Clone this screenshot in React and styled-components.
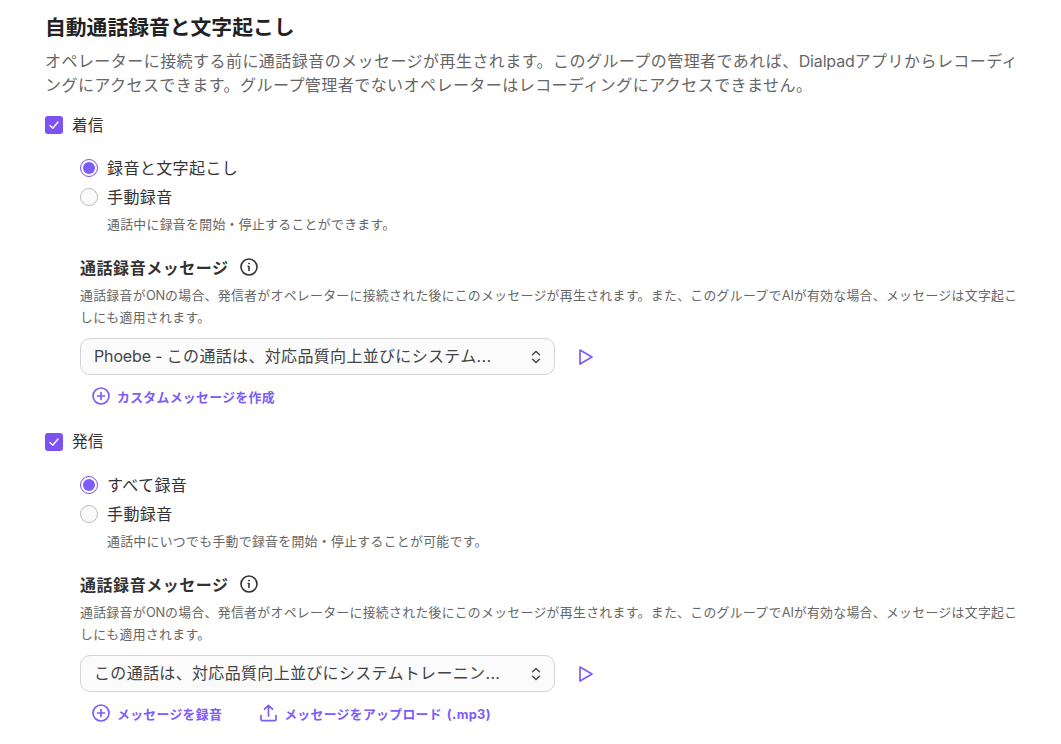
import React from 'react';
import styled, { createGlobalStyle } from 'styled-components';

const Global = createGlobalStyle`
  html, body { margin: 0; padding: 0; background: #fff; }
  body { font-family: Inter, "Noto Sans CJK JP", sans-serif; color: #333; height: 744px; overflow: hidden; }
`;
const Page = styled.div`
  padding: 14px 30px 0 45px;
  display: flex;
  flex-direction: column;
`;
const Title = styled.h1`
  margin: 0;
  font-size: 20.8px;
  line-height: 27px;
  font-weight: 700;
  color: #222;
`;
const Lead = styled.p`
  margin: 8px 0 0;
  font-size: 16px;
  letter-spacing: 0.45px;
  line-height: 24px;
  color: #666;
`;
const Line = styled.span`
  display: block;
  white-space: nowrap;
`;
const Latin = styled.span`
  letter-spacing: -0.15px;
`;
const RowText = styled.span`
  margin-bottom: 2px;
`;
const SelectText = styled.span`
  margin-bottom: 3px;
`;
const CheckRow = styled.label`
  display: flex;
  align-items: center;
  gap: 9px;
  height: 24px;
  font-size: 15.7px;
  color: #333;
  margin-top: ${p => p.$top}px;
`;
const CheckBox = styled.span`
  width: 18px;
  height: 18px;
  border-radius: 3px;
  background: #7c52f5;
  display: flex;
  align-items: center;
  justify-content: center;
`;
const Indent = styled.div`
  margin-left: 35px;
  display: flex;
  flex-direction: column;
`;
const Radios = styled.div`
  margin-top: 19px;
  display: flex;
  flex-direction: column;
  gap: 5px;
`;
const RadioRow = styled.label`
  display: flex;
  align-items: center;
  gap: 9px;
  height: 24px;
  font-size: 16px;
  letter-spacing: 0.4px;
  color: #333;
`;
const Radio = styled.span`
  width: 18px;
  height: 18px;
  box-sizing: border-box;
  border-radius: 50%;
  border: 1px solid ${p => (p.$on ? '#7c52f5' : '#bdbdbd')};
  background: ${p => (p.$on ? '#fff' : '#fafafa')};
  display: flex;
  align-items: center;
  justify-content: center;
  &::after {
    content: '';
    display: ${p => (p.$on ? 'block' : 'none')};
    width: 12px;
    height: 12px;
    border-radius: 50%;
    background: #7c5cfa;
  }
`;
const Hint = styled.div`
  margin: 6.4px 0 0 27px;
  font-size: 12.85px;
  letter-spacing: 0.33px;
  line-height: 20px;
  color: #666;
`;
const FieldHead = styled.div`
  margin-top: 20px;
  display: flex;
  align-items: center;
  gap: 11px;
  height: 24px;
  font-size: 16px;
  letter-spacing: 0.55px;
  font-weight: 700;
  color: #333;
`;
const FieldHelp = styled.p`
  margin: 6px 0 0;
  font-size: 12.85px;
  letter-spacing: 0.33px;
  line-height: 22px;
  color: #666;
`;
const SelectRow = styled.div`
  margin-top: 9px;
  display: flex;
  align-items: center;
  gap: 23px;
`;
const Select = styled.div`
  width: 475px;
  height: 37px;
  box-sizing: border-box;
  border: 1px solid #d4d4d4;
  border-radius: 10px;
  background: #fbfbfb;
  display: flex;
  align-items: center;
  justify-content: space-between;
  padding: 0 13px;
  font-size: 16px;
  letter-spacing: 0.33px;
  color: #444;
`;
const Actions = styled.div`
  margin-top: 11px;
  padding-left: 12px;
  display: flex;
  gap: 38px;
  height: 20px;
`;
const Action = styled.a`
  display: flex;
  align-items: center;
  gap: 7px;
  font-size: 12.85px;
  letter-spacing: 0.33px;
  word-spacing: 1.500px;
  font-weight: 700;
  color: #7c5cfa;
`;

const Check = () => (
  <svg width="12" height="12" viewBox="0 0 12 12" fill="none" stroke="#fff" strokeWidth="1.4" strokeLinecap="round" strokeLinejoin="round">
    <path d="M2 6.5 4.8 9.2 10 3" />
  </svg>
);
const Info = () => (
  <svg width="18" height="18" viewBox="0 0 18 18" fill="none" stroke="#333" strokeWidth="1.6" strokeLinecap="round">
    <circle cx="9" cy="9" r="8" />
    <path d="M9 8.500v4M8.200 8.500H9" />
    <circle cx="9" cy="5.600" r=".5" fill="#333" strokeWidth="1" />
  </svg>
);
const Chevrons = () => (
  <svg width="10" height="16" viewBox="0 0 10 16" fill="none" stroke="#444" strokeWidth="1.4" strokeLinecap="round" strokeLinejoin="round">
    <path d="M1.500 5.800 5 2.500 8.500 5.800M1.500 10.200 5 13.500 8.500 10.200" />
  </svg>
);
const Play = () => (
  <svg width="16" height="18" viewBox="0 0 16 18" fill="none" stroke="#7c5cfa" strokeWidth="1.7" strokeLinejoin="round">
    <path d="M2 2 14 9 2 16Z" />
  </svg>
);
const Plus = () => (
  <svg width="18" height="18" viewBox="0 0 18 18" fill="none" stroke="#7c5cfa" strokeWidth="1.7" strokeLinecap="round">
    <circle cx="9" cy="9" r="8" />
    <path d="M9 5.500v7M5.500 9h7" />
  </svg>
);
const Upload = () => (
  <svg width="17" height="18" viewBox="0.5 0 17 18" fill="none" stroke="#7c5cfa" strokeWidth="1.7" strokeLinecap="round" strokeLinejoin="round">
    <path d="M1.500 11.500v3.700c0 .8.700 1.500 1.500 1.500h12c.8 0 1.500-.7 1.500-1.500v-3.700M9 12V1.500M5 5.200 9 1.300l4 3.900" />
  </svg>
);

const Help = () => (
  <FieldHelp>
    <Line>通話録音が<Latin>ON</Latin>の場合、発信者がオペレーターに接続された後にこのメッセージが再生されます。また、このグループで<Latin>AI</Latin>が有効な場合、メッセージは文字起こ</Line>
    <Line>しにも適用されます。</Line>
  </FieldHelp>
);

const Section = ({ label, top, first, hint, select, children }) => (
  <>
    <CheckRow $top={top}><CheckBox><Check /></CheckBox><RowText>{label}</RowText></CheckRow>
    <Indent>
      <Radios>
        <RadioRow><Radio $on /><RowText>{first}</RowText></RadioRow>
        <RadioRow><Radio /><RowText>手動録音</RowText></RadioRow>
      </Radios>
      <Hint>{hint}</Hint>
      <FieldHead>通話録音メッセージ<Info /></FieldHead>
      <Help />
      <SelectRow>
        <Select><SelectText>{select}</SelectText><Chevrons /></Select>
        <Play />
      </SelectRow>
      <Actions>{children}</Actions>
    </Indent>
  </>
);

export default function App() {
  return (
    <Page>
      <Global />
      <Title>自動通話録音と文字起こし</Title>
      <Lead>
        <Line>オペレーターに接続する前に通話録音のメッセージが再生されます。このグループの管理者であれば、<Latin>Dialpad</Latin>アプリからレコーディ</Line>
        <Line>ングにアクセスできます。グループ管理者でないオペレーターはレコーディングにアクセスできません。</Line>
      </Lead>
      <Section label="着信" top={16} first="録音と文字起こし" hint="通話中に録音を開始・停止することができます。" select={<><Latin>Phoebe - </Latin>この通話は、対応品質向上並びにシステム...</>}>
        <Action><Plus />カスタムメッセージを作成</Action>
      </Section>
      <Section label="発信" top={23.3} first="すべて録音" hint="通話中にいつでも手動で録音を開始・停止することが可能です。" select="この通話は、対応品質向上並びにシステムトレーニン...">
        <Action><Plus />メッセージを録音</Action>
        <Action><Upload />メッセージをアップロード (.mp3)</Action>
      </Section>
    </Page>
  );
}
